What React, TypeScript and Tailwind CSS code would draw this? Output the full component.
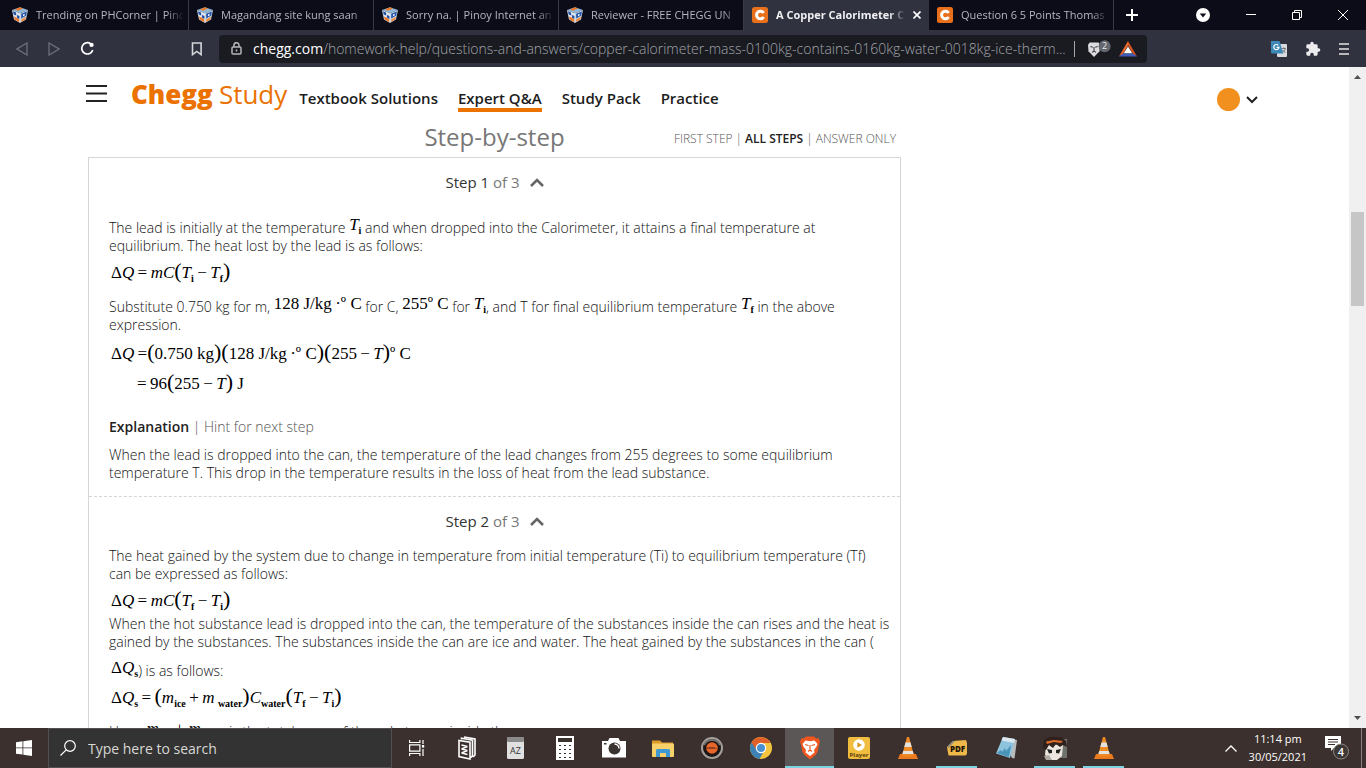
import React from 'react'
import clsx from 'clsx'

type TabData = {
  title: string
  icon: 'cube' | 'chegg'
  active?: boolean
}

const tabs: TabData[] = [
  { title: 'Trending on PHCorner | Pinc', icon: 'cube' },
  { title: 'Magandang site kung saan', icon: 'cube' },
  { title: 'Sorry na. | Pinoy Internet an', icon: 'cube' },
  { title: 'Reviewer - FREE CHEGG UN', icon: 'cube' },
  { title: 'A Copper Calorimeter C', icon: 'chegg', active: true },
  { title: 'Question 6 5 Points Thomas', icon: 'chegg' },
]

const navLinks = ['Textbook Solutions', 'Expert Q&A', 'Study Pack', 'Practice']

// ---------- Browser icons ----------

const CubeIcon = () => (
  <svg className="h-4 w-4 shrink-0" viewBox="0 0 16 16">
    <path d="M0 3 8 .3 16 3 8 6.2Z" fill="#8fb7d8" />
    <path d="M3 2.2 8 .3l3 1.2-5 2.2Z" fill="#e8792b" />
    <path d="M0 3l8 3.2V16L2 12.6Z" fill="#dfe6ef" />
    <path d="M16 3 8 6.2V16l6-3.4Z" fill="#c9d6e6" />
    <path d="M1 4.2l3 1.2.3 3-2.6-1ZM5 8l2.4 1v3L5 10.8Z" fill="#1f4fa0" />
    <path d="M2 9.4l3 1.4 2.3 1.6v2.8L2.6 12.4Z" fill="#e8792b" />
    <path d="M9.2 6.8l5.6-2.2-.5 4-5.1 3Z" fill="#2455a8" />
    <path d="M9.2 12.6l4.6-2.8-.4 2.6-4.2 2.6Z" fill="#ef8a3c" />
    <path d="M11 7.4l1.6-.6v1.6L11 9.2Z" fill="#fff" />
  </svg>
)

const CheggIcon = () => (
  <svg className="h-4 w-4 shrink-0" viewBox="0 0 16 16">
    <rect width="16" height="16" rx="2.5" fill="#e8701a" />
    <path d="M11.6 6A3.800 3.800 0 1 0 11.600 10" fill="none" stroke="#fff" strokeWidth="3" />
  </svg>
)

const BookmarkIcon = () => (
  <svg className="h-[14px] w-3" viewBox="0 0 12 14" fill="none" stroke="#d5d6da" strokeWidth="1.6">
    <path d="M1.5 1h8.6v11.6L5.8 9.4l-4.3 3.2Z" />
  </svg>
)

const LockIcon = () => (
  <svg className="h-[13px] w-[11px] shrink-0" viewBox="0 0 11 13" fill="none" stroke="#b5b6b8" strokeWidth="1.5">
    <rect x="1" y="5" width="9" height="7" rx="1" />
    <path d="M3 5V3.2a2.5 2.5 0 0 1 5 0V5M5.5 7.6v2" />
  </svg>
)

const ReloadIcon = () => (
  <svg className="h-[15px] w-[15px]" viewBox="0 0 16 16" fill="none">
    <path d="M13.6 9.6A6 6 0 1 1 11.4 3" stroke="#fff" strokeWidth="1.8" />
    <circle cx="12.3" cy="4.2" r="2.3" fill="#fff" />
  </svg>
)

const ShieldIcon = () => (
  <svg className="h-[18px] w-6" viewBox="0 0 24 18">
    <path d="M1 5l1.600-2.400h9L13 5l-.5 6.200L7 17l-5.500-5.800Z" fill="#dcdcde" />
    <path d="M3.400 6.400l2.400.8M10.600 6.400l-2.400.8M7 7v4M5 12.400l2-1.400 2 1.400" stroke="#3b3c44" strokeWidth="1.1" fill="none" />
    <circle cx="17.600" cy="6.200" r="6" fill="#64666e" />
    <text x="17.600" y="9.400" textAnchor="middle" fontSize="9" fill="#e8e8e8" fontFamily="Open Sans, sans-serif">2</text>
  </svg>
)

const BatIcon = () => (
  <svg className="h-4 w-[18px]" viewBox="0 0 18 16">
    <path d="M9 0 0 15.5 4 13 9 4.6Z" fill="#ee6a2c" />
    <path d="M9 0l9 15.5-4-2.5L9 4.6Z" fill="#d9541f" />
    <path d="M0 15.5h18L14 12.6H4Z" fill="#3f5bb5" />
    <path d="M9 5.4 13.2 12.2H4.8Z" fill="#fff" />
  </svg>
)

const TranslateIcon = () => (
  <svg className="h-4 w-4" viewBox="0 0 16 16">
    <rect x="6" y="3" width="10" height="13" rx="1" fill="#d8dadd" />
    <path d="M0 0h8.5l3.8 12.5H1a1 1 0 0 1-1-1Z" fill="#3c88b8" />
    <path d="M7.4 4.4A2.6 2.6 0 1 0 8 6.4H5.6" fill="none" stroke="#fff" strokeWidth="1.2" />
    <path d="M10.8 7.5h4M12.8 6.4v1M14.3 7.6c-.4 2-1.4 3-2.6 4M11.6 9c.6 1.2 1.6 2 2.8 2.6" stroke="#6d7078" strokeWidth=".9" fill="none" />
  </svg>
)

const PuzzleIcon = () => (
  <svg className="h-4 w-4" viewBox="0 0 24 24" fill="#ececee">
    <path d="M20.5 11H19V7a2 2 0 0 0-2-2h-4V3.500a2.500 2.500 0 0 0-5 0V5H4a2 2 0 0 0-2 2v3.800h1.500a2.700 2.700 0 0 1 0 5.400H2V20a2 2 0 0 0 2 2h3.800v-1.500a2.700 2.700 0 0 1 5.400 0V22H17a2 2 0 0 0 2-2v-4h1.500a2.500 2.500 0 0 0 0-5Z" />
  </svg>
)

// ---------- Browser chrome ----------

function Tab({ tab }: { tab: TabData }) {
  return (
    <div
      className={clsx(
        'flex h-full min-w-0 max-w-[185px] flex-1 items-center gap-2 pl-2',
        tab.active ? 'bg-[#30323f] pr-2 font-bold text-[#f0f0f2]' : 'pr-1 text-[#b4b6bf]',
        !tab.active && 'border-r border-[#3a3b46]',
      )}
    >
      {tab.icon === 'cube' ? <CubeIcon /> : <CheggIcon />}
      <span className="min-w-0 flex-1 overflow-hidden whitespace-nowrap text-[11px] [mask-image:linear-gradient(to_right,#000_88%,transparent)]">
        {tab.title}
      </span>
      {tab.active && (
        <button aria-label="Close tab">
          <svg className="h-2 w-2" viewBox="0 0 8 8" stroke="#fff" strokeWidth="1.6">
            <path d="M.5.5l7 7M7.500.5l-7 7" />
          </svg>
        </button>
      )}
    </div>
  )
}

function TabBar() {
  return (
    <div className="flex h-[30px] shrink-0 items-center bg-[#0b0c17] pl-1">
      {tabs.map(tab => (
        <Tab key={tab.title} tab={tab} />
      ))}
      <button aria-label="New tab" className="ml-3 shrink-0">
        <svg className="h-3 w-3" viewBox="0 0 12 12" stroke="#fff" strokeWidth="2">
          <path d="M6 0v12M0 6h12" />
        </svg>
      </button>
      <div className="ml-auto flex shrink-0 items-center gap-9 pr-[18px]">
        <button aria-label="Search tabs">
          <svg className="h-[14px] w-[14px]" viewBox="0 0 14 14">
            <circle cx="7" cy="7" r="7" fill="#fff" />
            <path d="M3.800 5.500h6.400L7 9.400Z" fill="#0b0c17" />
          </svg>
        </button>
        <button aria-label="Minimize">
          <svg className="h-[10px] w-[10px]" viewBox="0 0 10 10" stroke="#fff">
            <path d="M0 4.500h10" />
          </svg>
        </button>
        <button aria-label="Restore">
          <svg className="h-[10px] w-[10px]" viewBox="0 0 10 10" fill="none" stroke="#fff">
            <path d="M.5 2.500h7v7h-7ZM2.500 2.500v-2h7v7h-2" />
          </svg>
        </button>
        <button aria-label="Close window">
          <svg className="h-[10px] w-[10px]" viewBox="0 0 10 10" stroke="#fff">
            <path d="M0 0l10 10M10 0L0 10" />
          </svg>
        </button>
      </div>
    </div>
  )
}

function Toolbar() {
  return (
    <div className="flex h-[37px] shrink-0 items-center bg-[#30323f]">
      <div className="flex items-center gap-5 pl-4">
        <button aria-label="Back">
          <svg className="h-[14px] w-3" viewBox="0 0 12 14" fill="none" stroke="#6d6f7a" strokeWidth="1.3">
            <path d="M11 1v12L1 7Z" />
          </svg>
        </button>
        <button aria-label="Forward">
          <svg className="h-[14px] w-3" viewBox="0 0 12 14" fill="none" stroke="#6d6f7a" strokeWidth="1.3">
            <path d="M1 1v12l10-6Z" />
          </svg>
        </button>
        <button aria-label="Reload">
          <ReloadIcon />
        </button>
      </div>
      <button aria-label="Bookmark" className="ml-24">
        <BookmarkIcon />
      </button>
      <div className="ml-4 flex h-7 w-[928px] min-w-0 items-center rounded bg-[#191b21] pl-3 pr-[10px]">
        <LockIcon />
        <p className="ml-[11px] min-w-0 flex-1 whitespace-nowrap text-[14px] font-light text-[#a2a4a9]">
          <span className="font-normal text-white">chegg.com</span>
          /homework-help/questions-and-answers/copper-calorimeter-mass-0100kg-contains-0160kg-water-0018kg-ice-therm...
        </p>
        <span className="ml-3 h-4 w-px bg-[#a5a6aa]" />
        <button aria-label="Shields" className="ml-3">
          <ShieldIcon />
        </button>
        <button aria-label="Rewards" className="ml-2">
          <BatIcon />
        </button>
      </div>
      <div className="ml-auto flex items-center gap-[18px] pr-[17px]">
        <button aria-label="Translate">
          <TranslateIcon />
        </button>
        <button aria-label="Extensions">
          <PuzzleIcon />
        </button>
        <button aria-label="Menu">
          <svg className="h-3 w-[10px]" viewBox="0 0 10 12" stroke="#e4e4e6" strokeWidth="1.5">
            <path d="M0 1h10M0 6h10M0 11h10" />
          </svg>
        </button>
      </div>
    </div>
  )
}

// ---------- Math helpers ----------

const Sub = ({ children }: { children: React.ReactNode }) => (
  <sub className="bottom-[-4px] text-[10px] font-bold not-italic leading-none">{children}</sub>
)

const Paren = ({ children }: { children: React.ReactNode }) => (
  <span className="text-[22px] not-italic leading-none">{children}</span>
)

const Eq = ({ children }: { children: React.ReactNode }) => (
  <span className="align-[3px] font-['Liberation_Serif',serif] text-[17px] font-normal leading-none text-black">{children}</span>
)

const EqBlock = ({ children, className }: { children: React.ReactNode; className?: string }) => (
  <div className={clsx("flex items-center whitespace-pre pl-[2px] font-['Liberation_Serif',serif] text-[17px] font-normal leading-none text-black", className)}>
    <span>{children}</span>
  </div>
)

// ---------- Page ----------

function SiteHeader() {
  return (
    <header className="flex h-[50px] items-center pl-[86px] pr-[91px] pt-[3px]">
      <button aria-label="Open menu">
        <svg className="h-[19px] w-[21px]" viewBox="0 0 21 19" stroke="#222" strokeWidth="2">
          <path d="M0 2h21M0 9.500h21M0 17h21" />
        </svg>
      </button>
      <a href="#home" className="ml-6 flex items-baseline gap-[6px] text-[26px] leading-none text-[#eb7100]">
        <span className="font-extrabold">Chegg</span>
        <span>Study</span>
      </a>
      <nav className="ml-3 flex gap-5 pt-3 text-[15px] font-semibold text-[#1c1c1c]">
        {navLinks.map(label => (
          <a
            key={label}
            href="#nav"
            className={clsx('border-b-4 leading-5', label === 'Expert Q&A' ? 'border-[#eb7100]' : 'border-transparent')}
          >
            {label}
          </a>
        ))}
      </nav>
      <button aria-label="Account" className="ml-auto flex items-center gap-[6px] pt-3">
        <span className="h-[23px] w-[23px] rounded-full bg-[#f1901e]" />
        <svg className="h-2 w-3" viewBox="0 0 12 8" fill="none" stroke="#222" strokeWidth="2">
          <path d="M1 1l5 5 5-5" />
        </svg>
      </button>
    </header>
  )
}

function StepTitle({ step }: { step: number }) {
  return (
    <button className="mx-auto flex h-12 items-center gap-[10px] text-[15px] font-normal text-[#777]">
      <span>
        <span className="text-[#333]">Step {step}</span> of 3
      </span>
      <svg className="h-[9px] w-[14px]" viewBox="0 0 14 9" fill="none" stroke="#666" strokeWidth="2.600">
        <path d="M1 8l6-6 6 6" />
      </svg>
    </button>
  )
}

function Solution() {
  return (
    <main className="ml-[88px] max-w-[813px]">
      <div className="grid h-10 grid-cols-[1fr_auto_1fr] items-center">
        <h2 className="col-start-2 text-[24px] text-[#777]">Step-by-step</h2>
        <div className="flex justify-end gap-[3px] pr-[5px] pt-1 text-[12px] font-light text-[#555]">
          <a href="#first">FIRST STEP</a>|
          <a href="#all" className="font-semibold text-[#222]">ALL STEPS</a>|
          <a href="#answer">ANSWER ONLY</a>
        </div>
      </div>

      <div className="border border-b-0 border-[#d6d6d6] text-[14px] font-light leading-[18px] text-[#111]">
        <section className="whitespace-nowrap border-b border-dashed border-[#d6d6d6] px-5 pb-[14px]">
          <StepTitle step={1} />
          <p className="pt-[10px]">
            The lead is initially at the temperature <Eq><i>T</i><Sub>i</Sub></Eq> and when dropped into the Calorimeter, it attains a final temperature at
            <br />
            equilibrium. The heat lost by the lead is as follows:
          </p>
          <EqBlock className="h-8">
            Δ<i>Q</i>&thinsp;=&thinsp;<i>mC</i><Paren>(</Paren><i>T</i><Sub>i</Sub>&thinsp;−&thinsp;<i>T</i><Sub>f</Sub><Paren>)</Paren>
          </EqBlock>
          <p className="pt-2">
            Substitute 0.750 kg for m, <Eq>128 J/kg&thinsp;·º C</Eq> for C, <Eq>255º C</Eq> for <Eq><i>T</i><Sub>i</Sub></Eq>, and T for final equilibrium temperature <Eq><i>T</i><Sub>f</Sub></Eq> in the above
            <br />
            expression.
          </p>
          <EqBlock className="h-9">
            Δ<i>Q</i>&thinsp;=<Paren>(</Paren>0.750 kg<Paren>)(</Paren>128 J/kg&thinsp;·º C<Paren>)(</Paren>255&thinsp;−&thinsp;<i>T</i><Paren>)</Paren>º C
          </EqBlock>
          <EqBlock className="ml-[26px] h-6">
            =&thinsp;96<Paren>(</Paren>255&thinsp;−&thinsp;<i>T</i><Paren>)</Paren> J
          </EqBlock>
          <p className="pt-6 text-[#555]">
            <span className="font-semibold text-[#222]">Explanation</span> | Hint for next step
          </p>
          <p className="pt-[10px]">
            When the lead is dropped into the can, the temperature of the lead changes from 255 degrees to some equilibrium
            <br />
            temperature T. This drop in the temperature results in the loss of heat from the lead substance.
          </p>
        </section>

        <section className="whitespace-nowrap px-5">
          <StepTitle step={2} />
          <p className="pt-[2px]">
            The heat gained by the system due to change in temperature from initial temperature (Ti) to equilibrium temperature (Tf)
            <br />
            can be expressed as follows:
          </p>
          <EqBlock className="h-8">
            Δ<i>Q</i>&thinsp;=&thinsp;<i>mC</i><Paren>(</Paren><i>T</i><Sub>f</Sub>&thinsp;−&thinsp;<i>T</i><Sub>i</Sub><Paren>)</Paren>
          </EqBlock>
          <p>
            When the hot substance lead is dropped into the can, the temperature of the substances inside the can rises and the heat is
            <br />
            gained by the substances. The substances inside the can are ice and water. The heat gained by the substances in the can (
          </p>
          <p className="pl-[2px] pt-2">
            <Eq>Δ<i>Q</i><Sub>s</Sub></Eq>) is as follows:
          </p>
          <EqBlock className="h-8">
            Δ<i>Q</i><Sub>s</Sub>&thinsp;=&thinsp;<Paren>(</Paren><i>m</i><Sub>ice</Sub>&thinsp;+&thinsp;<i>m</i>&thinsp;<Sub>water</Sub><Paren>)</Paren><i>C</i><Sub>water</Sub><Paren>(</Paren><i>T</i><Sub>f</Sub>&thinsp;−&thinsp;<i>T</i><Sub>i</Sub><Paren>)</Paren>
          </EqBlock>
          <p className="pt-2">
            Here, <Eq><i>m</i><Sub>ice</Sub> + <i>m</i><Sub>water</Sub></Eq> is the total mass of the substances inside the can.
          </p>
        </section>
      </div>
    </main>
  )
}

function ScrollBar() {
  return (
    <div className="flex w-[17px] shrink-0 flex-col items-center bg-[#f0f0f0] py-2">
      <svg className="h-1 w-[7px] shrink-0" viewBox="0 0 7 4" fill="#505050">
        <path d="M0 4l3.500-4L7 4Z" />
      </svg>
      <div className="w-full flex-1 pt-[133px]">
        <div className="mx-auto h-[94px] w-[13px] bg-[#c6c6c6]" />
      </div>
      <svg className="h-1 w-[7px] shrink-0" viewBox="0 0 7 4" fill="#505050">
        <path d="M0 0l3.500 4L7 0Z" />
      </svg>
    </div>
  )
}

// ---------- Taskbar icons ----------

const TaskViewIcon = () => (
  <svg className="h-4 w-4" viewBox="0 0 16 16" fill="none" stroke="#fff" strokeWidth="1.2">
    <path d="M.6 0v2.500h10.300V0M.6 16v-2.500h10.300V16M.6 4.800h10.300v6.400H.6ZM14 0v4M14 9v7" />
    <rect x="12.900" y="5" width="2.300" height="2.600" fill="#fff" stroke="none" />
  </svg>
)

const BookIcon = () => (
  <svg className="h-6 w-[18px]" viewBox="0 0 18 24" fill="none" stroke="#fff" strokeWidth="1.600">
    <path d="M6 1l11 2v16l-2 2" />
    <path d="M3.500 3.500V2.200l11 2V20l-2 1.500" />
    <path d="M1 4.500l11 1.700V23L1 20.500Z" />
    <path d="M3.500 9l6 1.500M9.500 10.500l-6 2.500M3.500 13l6 1.500M9.500 14.500l-6 2.500M3.500 17l6 1.500" strokeWidth="1.400" />
  </svg>
)

const DictionaryIcon = () => (
  <svg className="h-[22px] w-[17px]" viewBox="0 0 17 22">
    <rect width="17" height="22" rx="1.500" fill="#e0e0e0" />
    <rect width="17" height="5" rx="1.500" fill="#8a8a8a" />
    <text x="8.500" y="16.500" textAnchor="middle" fontSize="9" fill="#333" fontFamily="Open Sans, sans-serif">AZ</text>
  </svg>
)

const CalculatorIcon = () => (
  <svg className="h-6 w-[18px]" viewBox="0 0 18 24">
    <rect width="18" height="24" fill="#fff" />
    <rect x="2" y="2" width="14" height="4" fill="#3a322f" />
    {[9, 13, 17, 21].map(y =>
      [3, 8, 13].map(x => <rect key={`${x}-${y}`} x={x} y={y} width="2" height="1" fill="#3a322f" />),
    )}
  </svg>
)

const CameraIcon = () => (
  <svg className="h-5 w-6" viewBox="0 0 24 20">
    <path d="M0 3h6l1.500-3h9L18 3h6v16.500H0Z" fill="#fff" />
    <circle cx="12.500" cy="10.500" r="6" fill="#3a322f" />
    <path d="M12.500 6a4.500 4.500 0 0 1 4.500 4.500" fill="none" stroke="#fff" strokeWidth="1.400" />
    <rect x="2" y="5" width="2.500" height="1.500" fill="#3a322f" />
  </svg>
)

const FolderIcon = () => (
  <svg className="h-[19px] w-[22px]" viewBox="0 0 22 19">
    <path d="M0 1.500h8l2 2h11V7H0Z" fill="#dd9b2a" />
    <rect y="4.500" width="22" height="13.500" rx="1" fill="#f8d16a" />
    <path d="M4 18v-6.500a1.500 1.500 0 0 1 1.500-1.500h11a1.500 1.500 0 0 1 1.500 1.500V18h-4v-4H8v4Z" fill="#3f97d3" />
  </svg>
)

const RoundAppIcon = () => (
  <svg className="h-[22px] w-[22px]" viewBox="0 0 22 22">
    <circle cx="11" cy="11" r="10" fill="#1c1614" stroke="#a3a09e" strokeWidth="2" />
    <path d="M3 8a9 9 0 0 1 16 0" fill="none" stroke="#77716e" strokeWidth="2" />
    <circle cx="11" cy="11" r="5.800" fill="#e8662a" />
    <path d="M4 11l3-.5 1 .5 1-1 1 1 1-1 1 1 1-1 1 1h4l-4 .6H7Z" fill="#3a1c12" />
  </svg>
)

const ChromeIcon = () => (
  <svg className="h-[22px] w-[22px]" viewBox="0 0 22 22">
    <circle cx="11" cy="11" r="11" fill="#f4c63d" />
    <path d="M1.500 5.500A11 11 0 0 0 9.500 21.900L14 14Z" fill="#3d82b5" />
    <path d="M1.500 5.500A11 11 0 0 1 20.600 6H11l-4.500 7Z" fill="#e0602a" />
    <circle cx="11" cy="11" r="5.200" fill="#fff" />
    <circle cx="11" cy="11" r="4" fill="#4a90d0" />
  </svg>
)

const BraveIcon = () => (
  <svg className="h-6 w-5" viewBox="0 0 20 24">
    <path d="M6 .5h8l2.200 2 2.300-.2L20 6l-.8 2-1.700 8-2 3-5.500 4.500L4.500 19l-2-3L.8 8 0 6l1.500-3.700 2.300.2Z" fill="#f0561f" />
    <path d="M5.500 4.500l4.500.8 4.500-.8L17.500 8l-1 2.500L14 14l.5 2.500L10 20l-4.500-3.500L6 14l-2.500-3.500-1-2.500Z" fill="#fff" />
    <path d="M5 8.500l3.500 1M15 8.500l-3.500 1M10 9v4.500M8 15.500l2-1.500 2 1.500" stroke="#f0561f" strokeWidth="1.200" fill="none" />
  </svg>
)

const PlayerIcon = () => (
  <svg className="h-[22px] w-[22px]" viewBox="0 0 22 22">
    <rect width="22" height="22" rx="2" fill="#f0bd3f" />
    <circle cx="11" cy="8" r="5.800" fill="#fff" />
    <path d="M9.300 5.200 14 8l-4.700 2.800Z" fill="#d99a20" />
    <text x="11" y="20" textAnchor="middle" fontSize="6" fontWeight="700" fill="#5c3d0d" fontFamily="Open Sans, sans-serif">Player</text>
  </svg>
)

const VlcIcon = () => (
  <svg className="h-[22px] w-5" viewBox="0 0 20 22">
    <path d="M2 17h16l2 5H0Z" fill="#ec7a1c" />
    <path d="M9 0h2l5 18.500c-3 1.500-9 1.500-12 0Z" fill="#f08a24" />
    <path d="M7.500 5.500h5l1.200 4.500H6.300ZM5.200 14h9.600l.8 3H4.400Z" fill="#e4e2de" />
  </svg>
)

const PdfIcon = () => (
  <svg className="h-4 w-5" viewBox="0 0 20 16">
    <path d="M0 7 6 1l13-1 1 3v11l-1.500 1.500H1.500Z" fill="#efb94a" />
    <path d="M0 7 6 1h2L1.500 8Z" fill="#8c8a86" />
    <text x="10.500" y="12" textAnchor="middle" fontSize="8" fontWeight="800" fill="#1d1608" fontFamily="Open Sans, sans-serif">PDF</text>
  </svg>
)

const NotepadIcon = () => (
  <svg className="h-[22px] w-[22px]" viewBox="0 0 22 22">
    <path d="M7 1l15 2-2.500 18.500L17 21Z" fill="#b9bcbd" />
    <path d="M8 0l12 2-5 19-14-4.500Z" fill="#8ec3dd" />
    <path d="M8 0l12 2-1 4-12.500-2.500Z" fill="#dbe8ee" />
    <path d="M2 16l4-3 1 2 3-4 1 3 5-6-1.500 9-1 3Z" fill="#4a93b8" />
  </svg>
)

const GameIcon = () => (
  <svg className="h-6 w-6" viewBox="0 0 24 24">
    <rect x="12" y="3" width="12" height="19" fill="#6e716c" />
    <path d="M3 9h17l-1 11-5 4H7l-5-5Z" fill="#ece6df" />
    <path d="M0 12 1 4l5-3h12l5 4 1 6-4-2-3 2-4-3-3 4-4-3-3 5Z" fill="#30211c" />
    <path d="M3 5.500l8-1.500 9 1-2 2-7-1-7 2Z" fill="#de6a2a" />
    <path d="M4 13l5 1v3l-3 .5ZM18 13l-5 1v3l3 .5Z" fill="#222" />
    <path d="M1 20l5-1 3 5H3Z" fill="#b0aca5" />
  </svg>
)

type TaskItem = {
  label: string
  Icon: () => React.ReactElement
  state?: 'active' | 'open'
}

const taskItems: TaskItem[] = [
  { label: 'Documents', Icon: BookIcon },
  { label: 'Dictionary', Icon: DictionaryIcon },
  { label: 'Calculator', Icon: CalculatorIcon },
  { label: 'Camera', Icon: CameraIcon },
  { label: 'File Explorer', Icon: FolderIcon },
  { label: 'Launcher', Icon: RoundAppIcon },
  { label: 'Chrome', Icon: ChromeIcon },
  { label: 'Brave', Icon: BraveIcon, state: 'active' },
  { label: 'Player app', Icon: PlayerIcon },
  { label: 'VLC', Icon: VlcIcon },
  { label: 'PDF reader', Icon: PdfIcon, state: 'open' },
  { label: 'Notepad', Icon: NotepadIcon },
  { label: 'Game', Icon: GameIcon, state: 'open' },
  { label: 'VLC player', Icon: VlcIcon, state: 'open' },
]

function Taskbar() {
  return (
    <footer className="flex h-10 shrink-0 items-stretch bg-[#3b302d] text-white">
      <button aria-label="Start" className="flex w-12 shrink-0 items-center justify-center">
        <svg className="h-4 w-4" viewBox="0 0 16 16" fill="#fff">
          <path d="M0 2.200 6.500 1.300v6.200H0ZM7.300 1.200 16 0v7.500H7.300ZM0 8.300h6.500v6.300L0 13.700ZM7.300 8.300H16V16l-8.700-1.200Z" />
        </svg>
      </button>
      <label className="flex w-[344px] min-w-0 items-center gap-3 border border-[#55504e] bg-[#333] pl-[11px]">
        <svg className="h-4 w-4 shrink-0" viewBox="0 0 16 16" fill="none" stroke="#fff" strokeWidth="1.200">
          <circle cx="10" cy="6" r="5.300" />
          <path d="M6.200 9.800.5 15.500" />
        </svg>
        <input
          type="text"
          aria-label="Search"
          placeholder="Type here to search"
          className="min-w-0 flex-1 bg-transparent text-[14px] outline-none placeholder:text-[#d8d8d4]"
        />
      </label>
      <button aria-label="Task View" className="flex w-[50px] shrink-0 items-center justify-center">
        <TaskViewIcon />
      </button>
      {taskItems.map(({ label, Icon, state }) => (
        <button
          key={label}
          aria-label={label}
          className={clsx('relative flex w-[49px] shrink-0 items-center justify-center', state === 'active' && 'bg-[#5b5756]')}
        >
          <Icon />
          {state && (
            <span className={clsx('absolute bottom-0 h-[2px] bg-[#7ed3e2]', state === 'active' ? 'inset-x-0' : 'inset-x-1')} />
          )}
        </button>
      ))}
      <div className="ml-auto flex shrink-0 items-center">
        <button aria-label="Show hidden icons">
          <svg className="h-[7px] w-3" viewBox="0 0 12 7" fill="none" stroke="#fff" strokeWidth="1.300">
            <path d="M.5 6.500 6 1l5.500 5.500" />
          </svg>
        </button>
        <div className="ml-3 text-center text-[11px] leading-[18px]">
          <div>11:14 pm</div>
          <div>30/05/2021</div>
        </div>
        <button aria-label="Notifications" className="ml-[18px]">
          <svg className="h-6 w-6" viewBox="0 0 24 24">
            <path d="M0 0h16v12H9l-3 3v-3H0Z" fill="#fff" />
            <path d="M3 3.500h10M3 6h10M3 8.500h7" stroke="#3b302d" />
            <circle cx="16" cy="15.500" r="7.500" fill="#3d3836" stroke="#8c8886" />
            <text x="16" y="19.500" textAnchor="middle" fontSize="11" fontWeight="600" fill="#fff" fontFamily="Open Sans, sans-serif">4</text>
          </svg>
        </button>
        <span className="ml-3 mr-1 h-10 w-px bg-[#8a8280]" />
      </div>
    </footer>
  )
}

export default function App() {
  return (
    <div className="flex h-screen flex-col overflow-hidden bg-white font-['Open_Sans',sans-serif]">
      <TabBar />
      <Toolbar />
      <div className="flex min-h-0 flex-1">
        <div className="min-w-0 flex-1 overflow-hidden">
          <SiteHeader />
          <Solution />
        </div>
        <ScrollBar />
      </div>
      <Taskbar />
    </div>
  )
}
